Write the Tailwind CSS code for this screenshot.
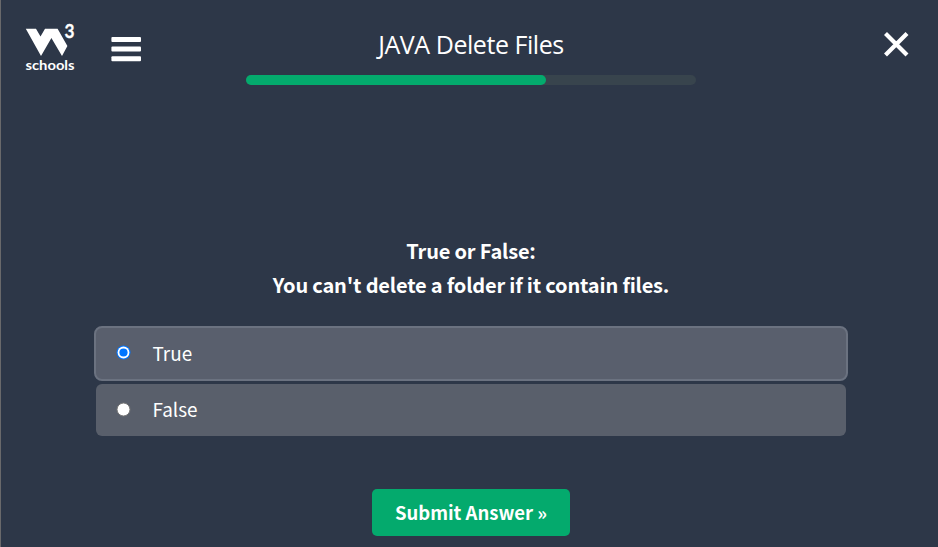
<!DOCTYPE html>
<html lang="en">
<head>
<meta charset="utf-8">
<title>JAVA Delete Files</title>
<script src="https://cdn.jsdelivr.net/npm/@tailwindcss/browser@4"></script>
</head>
<body class="bg-[#2d3748] text-white overflow-hidden">
<div class="h-[547px] w-[938px] border-l border-[#69696b] flex flex-col overflow-hidden font-['Noto_Sans_CJK_SC',sans-serif]">
  <header class="h-[90px] shrink-0 grid grid-cols-[245px_450px_242px]">
    <div class="flex items-start pl-6">
      <svg class="w-[52px] h-[54px] mt-5 shrink-0" viewBox="25 20 52 54" fill="#fff" role="img" aria-label="W3Schools">
        <path d="M25.8 28.8H36L40.5 36.6L45 28.8H57.6L67.4 46L62 56L51.4 38L41 56Z"/>
        <text x="64.6" y="38" font-size="18" font-weight="700" font-family="Lato, sans-serif" textLength="10" lengthAdjust="spacingAndGlyphs" stroke="#fff" stroke-width=".3">3</text>
        <text x="25.5" y="69.8" font-size="13.5" font-weight="700" font-family="Lato, sans-serif" textLength="49" lengthAdjust="spacingAndGlyphs">schools</text>
      </svg>
      <svg class="w-[30px] h-[26px] ml-[34px] mt-9 shrink-0" viewBox="0 0 30 26" fill="#fff"><rect x=".4" y="1" width="29.6" height="5" rx="1"/><rect x=".4" y="10.5" width="29.6" height="5" rx="1"/><rect x=".4" y="20.3" width="29.6" height="5" rx="1"/></svg>
    </div>
    <div class="flex flex-col items-center">
      <h1 class="h-[75px] pt-[28px] leading-8 text-[25px] tracking-[-0.45px] whitespace-nowrap font-['Open_Sans',sans-serif]">JAVA Delete Files</h1>
      <div class="w-[450px] h-[10px] rounded-full bg-[#38444d]"><div class="w-[300px] h-[10px] rounded-full bg-[#04aa6d]"></div></div>
    </div>
    <svg class="w-[26px] h-[26px] ml-[187px] mt-[31px]" viewBox="0 0 26 26" stroke="#fff" stroke-width="4.2"><path d="M2.5 2.5L24 24M24 2.5L2.5 24"/></svg>
  </header>
  <main class="flex flex-col items-center pt-[144px] pl-[3px]">
    <div class="text-center font-bold text-[20px] leading-[34px] tracking-[-0.18px] whitespace-nowrap"><p>True or False:</p><p>You can't delete a folder if it contain files.</p></div>
    <div class="w-[754px] mt-6 -ml-px flex flex-col items-center gap-[3px]">
      <label class="w-[754px] h-[55px] rounded-[8px] border-2 border-[#6b7280] bg-[#595f6d] flex items-center pl-5">
        <svg class="size-[15px] mb-[3px]" viewBox="0 0 15 15"><circle cx="7.5" cy="7.5" r="7" fill="#0075ff"/><circle cx="7.5" cy="7.5" r="5.9" fill="#fff"/><circle cx="7.5" cy="7.5" r="4.1" fill="#0075ff"/></svg>
        <span class="ml-[22px] pb-[2px] text-[18.9px] leading-6">True</span>
      </label>
      <label class="w-[750px] h-[52px] rounded-[6px] bg-[#595f6b] flex items-center pl-5">
        <svg class="size-[15px] mb-[2px]" viewBox="0 0 15 15"><circle cx="7.5" cy="7.5" r="6.5" fill="#fff" stroke="#767676"/></svg>
        <span class="ml-[22px] pb-[2px] text-[18.9px] leading-6">False</span>
      </label>
    </div>
    <button class="mt-[53px] -ml-px w-[198px] h-[47px] pb-[2px] pl-px rounded-[5px] bg-[#04aa6d] font-bold text-[18.5px] leading-6 whitespace-nowrap">Submit Answer »</button>
  </main>
</div>
</body>
</html>
